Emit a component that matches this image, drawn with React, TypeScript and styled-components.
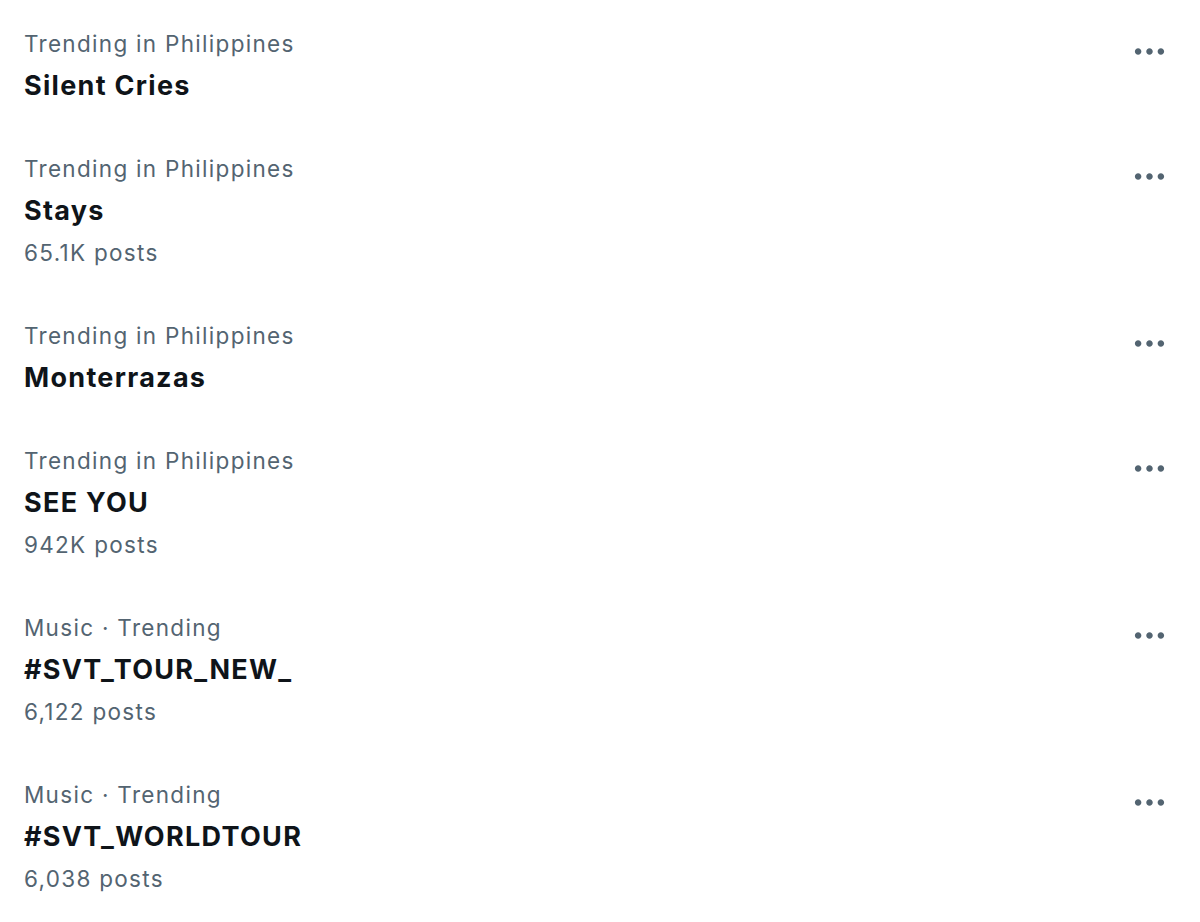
import React from 'react';
import styled, { createGlobalStyle } from 'styled-components';

const Global = createGlobalStyle`
  html, body { margin: 0; padding: 0; background: #ffffff; }
  body { font-family: Inter, 'Open Sans', sans-serif; -webkit-font-smoothing: antialiased; }
`;

const List = styled.div`
  display: flex;
  flex-direction: column;
  width: 1200px;
`;

const Row = styled.div`
  display: flex;
  align-items: flex-start;
  justify-content: space-between;
  padding: 23px 31px 18px 24px;
`;

const Info = styled.div`
  display: flex;
  flex-direction: column;
`;

const Context = styled.span`
  font-size: 22.5px;
  line-height: 42px;
  letter-spacing: 1.3px;
  color: #536471;
`;

const Topic = styled.span`
  font-size: 27px;
  line-height: 42px;
  letter-spacing: 1.3px;
  font-weight: 700;
  color: #0f1419;
`;

const Count = styled.span`
  font-size: 22.5px;
  line-height: 42px;
  letter-spacing: 1.3px;
  color: #536471;
`;

const MoreButton = styled.div`
  width: 39px;
  height: 39px;
  margin-top: 9px;
  color: #536471;
  display: flex;
  align-items: center;
  justify-content: center;

  svg { width: 39px; height: 39px; fill: currentColor; }
`;

const Dots = () => (
  <svg viewBox="0 0 24 24" aria-hidden="true">
    <path d="M3 12c0-1.1.9-2 2-2s2 .9 2 2-.9 2-2 2-2-.9-2-2zm9 2c1.1 0 2-.9 2-2s-.9-2-2-2-2 .9-2 2 .9 2 2 2zm7 0c1.1 0 2-.9 2-2s-.9-2-2-2-2 .9-2 2 .9 2 2 2z" />
  </svg>
);

const trends = [
  { context: 'Trending in Philippines', topic: 'Silent Cries' },
  { context: 'Trending in Philippines', topic: 'Stays', posts: '65.1K posts' },
  { context: 'Trending in Philippines', topic: 'Monterrazas' },
  { context: 'Trending in Philippines', topic: 'SEE YOU', posts: '942K posts' },
  { context: 'Music · Trending', topic: '#SVT_TOUR_NEW_', posts: '6,122 posts' },
  { context: 'Music · Trending', topic: '#SVT_WORLDTOUR', posts: '6,038 posts' },
];

export default function App() {
  return (
    <>
      <Global />
      <List>
        {trends.map(t => (
          <Row key={t.topic}>
            <Info>
              <Context>{t.context}</Context>
              <Topic>{t.topic}</Topic>
              {t.posts && <Count>{t.posts}</Count>}
            </Info>
            <MoreButton>
              <Dots />
            </MoreButton>
          </Row>
        ))}
      </List>
    </>
  );
}
